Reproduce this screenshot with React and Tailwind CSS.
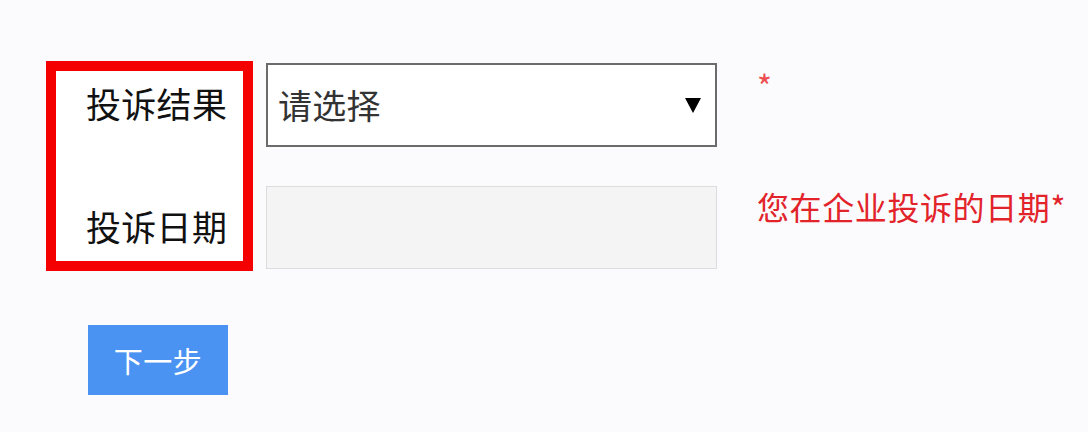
export default function App() {
  const font = { fontFamily: '"Noto Sans CJK SC", "Noto Sans", sans-serif' };
  return (
    <div className="w-[1088px] h-[432px] bg-[#fbfbfd] pl-[46px] pt-[61px]" style={font}>
      <div className="flex items-start">
        <div className="shrink-0 w-[207px] h-[210px] border-[10px] border-[#f50000] bg-white flex flex-col justify-between pl-[30px] pt-[14px] pb-[18px] whitespace-nowrap">
          <div className="text-[35px] leading-[35px] text-[#111] tracking-[0.3px]">投诉结果</div>
          <div className="text-[35px] leading-[35px] text-[#111] tracking-[0.3px]">投诉日期</div>
        </div>
        <div className="shrink-0 ml-[13px] pt-[2px] flex flex-col gap-[39px]">
          <div className="w-[451px] h-[84px] border-2 border-[#6b6b6b] bg-white flex items-center justify-between pl-[10px] pr-[14px]">
            <span className="text-[34px] leading-none text-[#333] tracking-[0.3px]">请选择</span>
            <svg width="16" height="15" viewBox="0 0 16 15"><path d="M0 0H16L8 15Z" fill="#000" /></svg>
          </div>
          <div className="w-[451px] h-[83px] border border-[#dcdcdc] bg-[#f4f4f5]" />
        </div>
        <div className="shrink-0 ml-[40px] flex flex-col whitespace-nowrap">
          <div className="h-[129px] pt-[8px] text-[32px] leading-[32px] text-[#ec4e52]">*</div>
          <div className="text-[32px] leading-[32px] text-[#e2232a] tracking-[0.6px]">您在企业投诉的日期*</div>
        </div>
      </div>
      <button className="ml-[42px] mt-[54px] w-[140px] h-[70px] bg-[#4b93f3] text-white text-[29px] leading-none tracking-[0.5px] flex items-center justify-center">
        下一步
      </button>
    </div>
  );
}
